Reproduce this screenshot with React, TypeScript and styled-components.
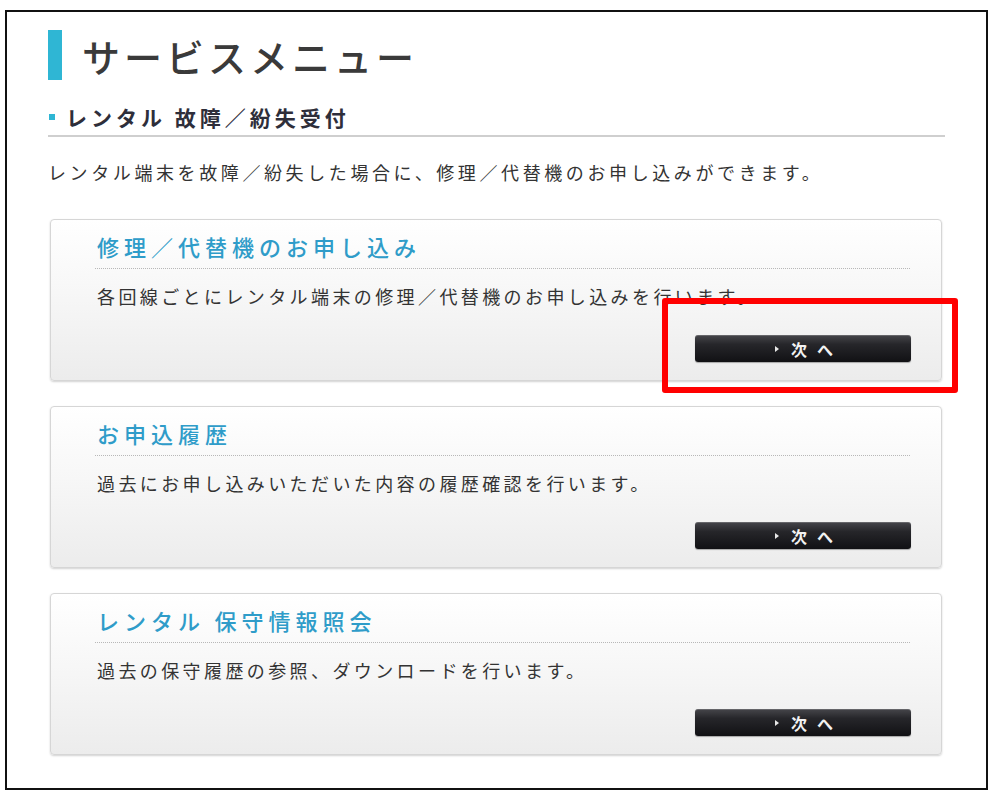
import styled, { createGlobalStyle } from "styled-components";

const GlobalStyle = createGlobalStyle`
  html, body {
    margin: 0;
    padding: 0;
    background: #ffffff;
  }
  body {
    font-family: "Noto Sans CJK JP", "Noto Sans", sans-serif;
    color: #333;
  }
`;

const Frame = styled.div`
  box-sizing: border-box;
  margin: 10px 0 0 5px;
  width: 983px;
  height: 780px;
  border: 2px solid #111;
  padding: 18px 41px 0 41px;
  background: #fff;
`;

const PageTitle = styled.h1`
  display: flex;
  align-items: center;
  height: 50px;
  margin: 0;
  font-size: 38px;
  font-weight: 500;
  letter-spacing: 4px;
  color: #3a3a3a;

  &::before {
    content: "";
    width: 14px;
    height: 50px;
    margin-right: 20px;
    background: #2fb6d4;
  }
`;

const SubHeading = styled.h2`
  display: flex;
  align-items: center;
  margin: 23px 0 0;
  padding-bottom: 4px;
  border-bottom: 2px solid #cfcfcf;
  line-height: 28px;
  font-size: 21px;
  font-weight: 700;
  letter-spacing: 4px;
  color: #2e2e3a;

  &::before {
    content: "";
    width: 6px;
    height: 6px;
    margin: 0 11px 0 1px;
    background: #2fb6d4;
  }
`;

const Lead = styled.p`
  margin: 23px 0 0;
  line-height: 24px;
  font-size: 18px;
  letter-spacing: 3.6px;
  color: #333;
`;

const CardList = styled.div`
  display: flex;
  flex-direction: column;
  gap: 25px;
  margin: 35px 3px 0 2px;
`;

const Card = styled.section`
  position: relative;
  display: flex;
  flex-direction: column;
  padding: 11px 0 18px;
  border: 1px solid #d6d6d6;
  border-radius: 4px;
  background: linear-gradient(#ffffff 0%, #f7f7f7 45%, #ececec 100%);
  box-shadow: 0 1px 2px rgba(0, 0, 0, 0.18);
`;

const CardTitle = styled.h3`
  margin: 0 31px 0 44px;
  padding: 0 0 7px 2px;
  border-bottom: 1px dotted #b8b8b8;
  line-height: 30px;
  font-size: 22px;
  font-weight: 500;
  letter-spacing: 5px;
  color: #2f9cc9;
`;

const CardText = styled.p`
  margin: 15px 0 0 46px;
  line-height: 24px;
  font-size: 18px;
  letter-spacing: 3.4px;
  color: #333;
`;

const NextButton = styled.button`
  display: flex;
  align-items: center;
  justify-content: center;
  align-self: flex-end;
  width: 216px;
  height: 27px;
  margin: 27px 30px 0 0;
  padding: 0 0 0 12px;
  border: 0;
  border-radius: 3px;
  background: linear-gradient(#46464b 0%, #26262a 35%, #111114 100%);
  box-shadow: inset 0 1px 0 rgba(255, 255, 255, 0.18), 0 1px 1px rgba(0, 0, 0, 0.3);
  font-family: "Noto Sans CJK JP", sans-serif;
  font-size: 16px;
  font-weight: 700;
  letter-spacing: 10px;
  color: #f2f2f2;
  cursor: pointer;

  &::before {
    content: "";
    width: 0;
    height: 0;
    margin-right: 12px;
    border-top: 3px solid transparent;
    border-bottom: 3px solid transparent;
    border-left: 4px solid #e8e8e8;
  }
`;

const Highlight = styled.div`
  position: absolute;
  left: 611px;
  top: 78px;
  width: 296px;
  height: 95px;
  box-sizing: border-box;
  border: 6px solid #ff0000;
  border-radius: 3px;
  pointer-events: none;
`;

const menus = [
  {
    title: "修理／代替機のお申し込み",
    text: "各回線ごとにレンタル端末の修理／代替機のお申し込みを行います。",
    marked: true,
  },
  {
    title: "お申込履歴",
    text: "過去にお申し込みいただいた内容の履歴確認を行います。",
    marked: false,
  },
  {
    title: "レンタル\u2009保守情報照会",
    text: "過去の保守履歴の参照、ダウンロードを行います。",
    marked: false,
  },
];

const App = () => {
  return (
    <>
      <GlobalStyle />
      <Frame>
        <PageTitle>サービスメニュー</PageTitle>
        <SubHeading>レンタル 故障／紛失受付</SubHeading>
        <Lead>レンタル端末を故障／紛失した場合に、修理／代替機のお申し込みができます。</Lead>

        <CardList>
          {menus.map((m) => (
            <Card key={m.title}>
              <CardTitle>{m.title}</CardTitle>
              <CardText>{m.text}</CardText>
              <NextButton type="button">次へ</NextButton>
              {m.marked && <Highlight />}
            </Card>
          ))}
        </CardList>
      </Frame>
    </>
  );
};

export default App;
